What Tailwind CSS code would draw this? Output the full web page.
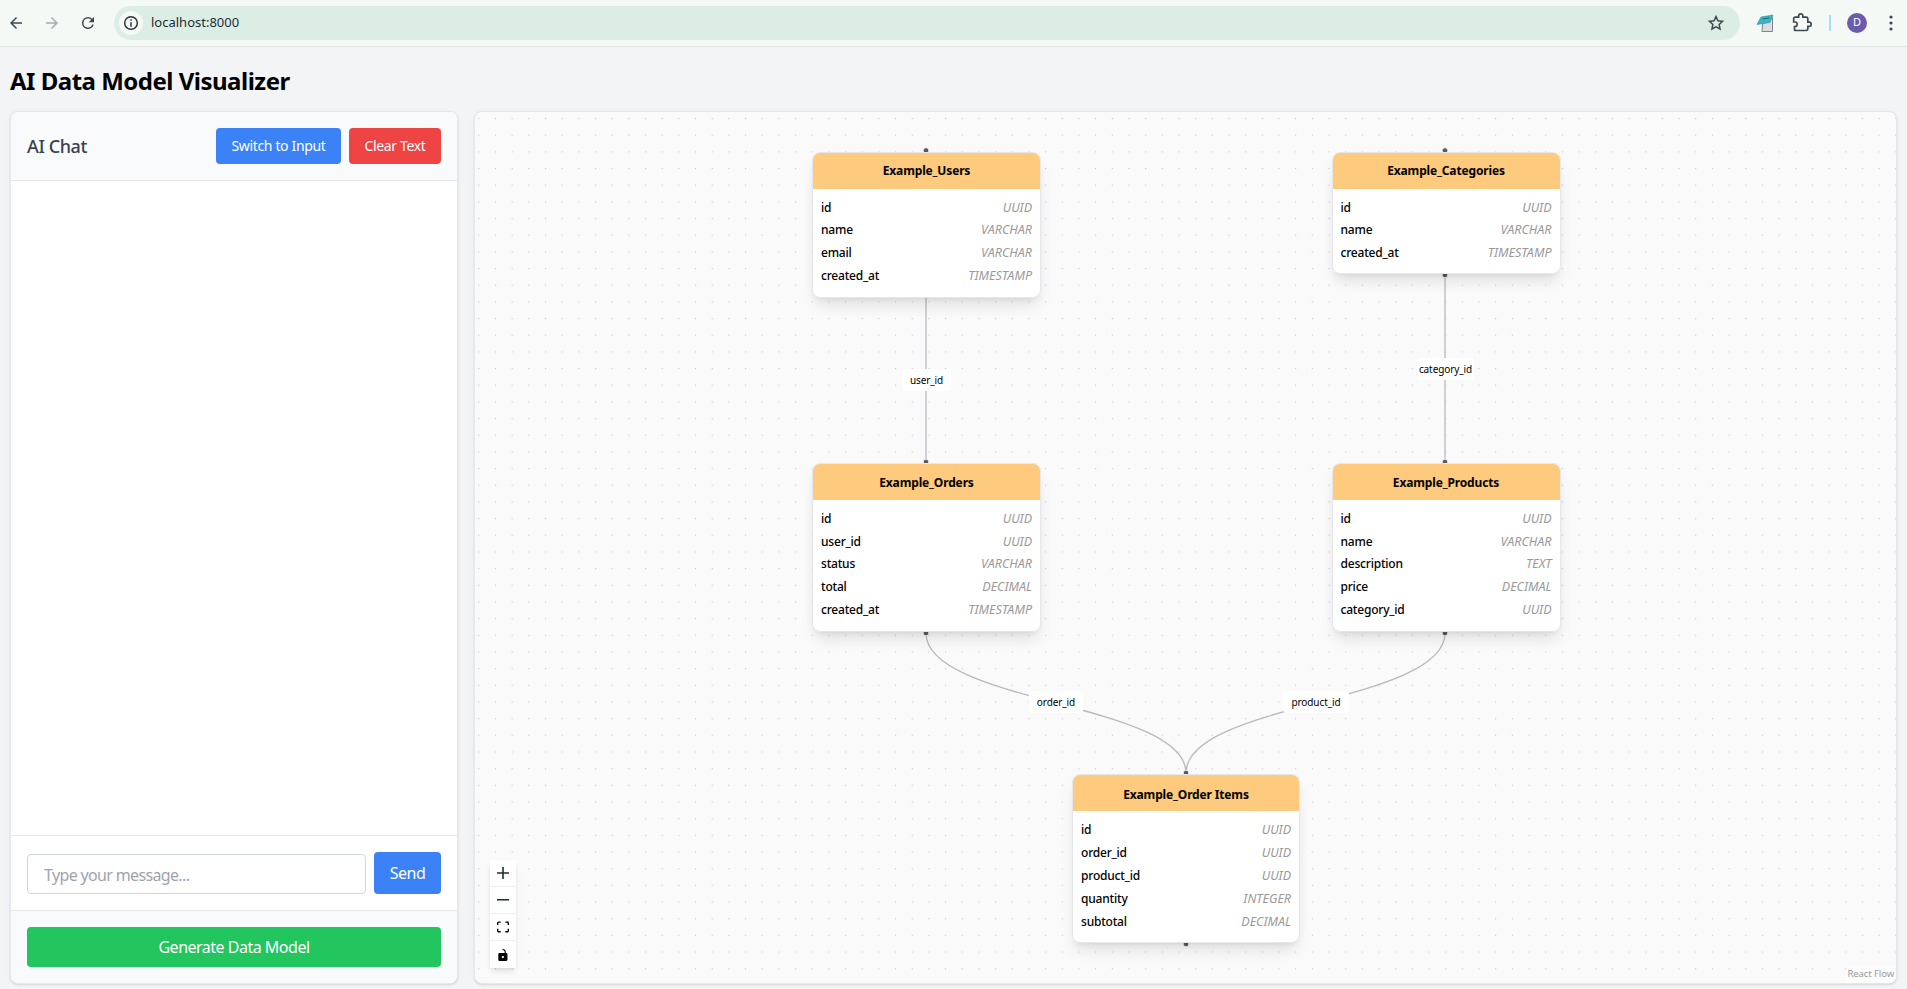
<!DOCTYPE html>
<html lang="en">
<head>
    <meta charset="UTF-8">
    <meta name="viewport" content="width=device-width, initial-scale=1.0">
    <title>AI Data Model Visualizer</title>
    <script src="https://cdn.jsdelivr.net/npm/@tailwindcss/browser@4"></script>
</head>
<body class="h-[989px] overflow-hidden flex flex-col bg-[#f3f4f6] font-['Noto_Sans',sans-serif] text-black">

<!-- browser toolbar -->
<div class="h-[47px] shrink-0 flex items-center bg-[#f4f9f6] border-b border-[#e2e6e8] pb-px">
    <div class="w-[114px] shrink-0 flex items-center pl-[7px] gap-[18px]">
        <svg class="w-[18px] h-[18px] text-[#3c4a4f]" viewBox="0 0 24 24" fill="currentColor"><path d="M20 11H7.830l5.590-5.590L12 4l-8 8 8 8 1.410-1.410L7.830 13H20v-2z"/></svg>
        <svg class="w-[18px] h-[18px] text-[#a5abb0]" viewBox="0 0 24 24" fill="currentColor"><path d="M4 11h12.170l-5.590-5.590L12 4l8 8-8 8-1.410-1.410L16.170 13H4v-2z"/></svg>
        <svg class="w-[18px] h-[18px] text-[#3c4a4f]" viewBox="0 0 24 24" fill="currentColor"><path d="M17.650 6.350A7.960 7.960 0 0 0 12 4a8 8 0 1 0 7.730 10h-2.080A6 6 0 1 1 12 6c1.660 0 3.140.690 4.220 1.780L13 11h7V4l-2.350 2.350z"/></svg>
    </div>
    <div class="w-[1626px] h-[34px] flex items-center rounded-full bg-[#dcede6] pl-[5px] pr-[15px]">
        <div class="w-6 h-6 rounded-full bg-[#f4f9f6] flex items-center justify-center">
            <svg class="w-4 h-4 text-[#283238]" viewBox="0 0 24 24" fill="none" stroke="currentColor" stroke-width="2.200"><circle cx="12" cy="12" r="9.500"/><path d="M12 11v6.500M12 6.500v2.200"/></svg>
        </div>
        <span class="ml-2 pt-px text-[13px] text-[#1f2d33]">localhost:8000</span>
        <svg class="ml-auto w-[18px] h-[18px] text-[#3c4a4f]" viewBox="0 0 24 24" fill="none" stroke="currentColor" stroke-width="2"><path d="M12 3.500l2.600 5.600 6.100.700-4.500 4.200 1.200 6-5.400-3-5.400 3 1.200-6-4.500-4.200 6.100-.700z"/></svg>
    </div>
    <div class="flex-1 flex items-center pl-[16px]">
        <svg class="w-5 h-5" viewBox="0 0 20 20"><path d="M7 6l9.500-1.500v14H6z" fill="#d9dce0" stroke="#7c8790" stroke-width="1"/><path d="M5 4l12-2-3 7.500-13 2z" fill="#3bb4c4" stroke="#2e8e9c" stroke-width=".6"/><path d="M6.500 6l7-1.200" stroke="#1d6f7c" stroke-width="1"/></svg>
        <svg class="ml-[16px] w-5 h-5 text-[#3c4a4f]" viewBox="0 0 24 24" fill="none" stroke="currentColor" stroke-width="2"><path d="M20.500 11H19V7a2 2 0 0 0-2-2h-4V3.500a2.500 2.500 0 0 0-5 0V5H4a2 2 0 0 0-2 2v3.800h1.500a2.700 2.700 0 0 1 0 5.400H3V20a1 1 0 0 0 1 1h13a2 2 0 0 0 2-2v-3h1.500a2.500 2.500 0 0 0 0-5z"/></svg>
        <div class="ml-[17px] w-0.5 h-4 bg-[#a8e0f5]"></div>
        <div class="ml-[16px] w-5 h-5 rounded-full bg-[#6a5bad] text-white text-[11px] flex items-center justify-center">D</div>
        <svg class="ml-[22px] w-1 h-4 text-[#3c4a4f]" viewBox="0 0 4 16" fill="currentColor"><circle cx="2" cy="2" r="1.600"/><circle cx="2" cy="8" r="1.600"/><circle cx="2" cy="14" r="1.600"/></svg>
    </div>
</div>

<!-- app -->
<div class="flex-1 min-h-0 flex flex-col px-2.5 pb-[5px]">
    <h1 class="text-2xl font-bold leading-8 mt-[18px] mb-[14px] tracking-[-0.5px]">AI Data Model Visualizer</h1>
    <div class="flex-1 min-h-0 flex gap-4">

        <!-- chat panel -->
        <div class="w-[448px] shrink-0 flex flex-col bg-white border border-[#e5e7eb] rounded-lg shadow-sm overflow-hidden">
            <div class="flex items-center justify-between p-4 bg-[#f9fafb] border-b border-[#e5e7eb]">
                <h2 class="text-lg font-medium text-[#374151] tracking-[-0.4px]">AI Chat</h2>
                <div class="flex gap-2">
                    <button class="h-9 w-[125px] bg-[#3b82f6] text-white text-sm rounded tracking-[-0.35px]">Switch to Input</button>
                    <button class="h-9 w-[92px] bg-[#ef4444] text-white text-sm rounded tracking-[-0.35px]">Clear Text</button>
                </div>
            </div>
            <div class="flex-1"></div>
            <div class="flex items-end gap-2 p-4 border-t border-[#e5e7eb]">
                <input type="text" placeholder="Type your message..." class="flex-1 min-w-0 h-10 px-4 pt-0.5 border border-[#d1d5db] rounded text-base tracking-[-0.65px] placeholder:text-[#9ca3af]">
                <button class="h-[42px] w-[67px] bg-[#3b82f6] text-white text-base rounded tracking-[-0.5px]">Send</button>
            </div>
            <div class="p-4 bg-[#f9fafb] border-t border-[#e5e7eb]">
                <button class="w-full h-10 bg-[#22c55e] text-white text-base rounded tracking-[-0.5px]">Generate Data Model</button>
            </div>
        </div>

        <!-- diagram -->
        <div class="flex-1 min-w-0 relative bg-[#fafafa] border border-[#e5e7eb] rounded-lg shadow-sm overflow-hidden">
            <svg class="absolute inset-0 w-full h-full">
                <defs>
                    <pattern id="dots" x="3.300" y="6" width="16.670" height="16.670" patternUnits="userSpaceOnUse">
                        <circle cx="0.600" cy="0.600" r="0.600" fill="#bcbcc2"/>
                    </pattern>
                </defs>
                <rect width="100%" height="100%" fill="url(#dots)"/>
                <g fill="none" stroke="#b8b8c0" stroke-width="1.300">
                    <path d="M451 184V350"/>
                    <path d="M970 163V350"/>
                    <path d="M451 521C451 591 711 591 711 661"/>
                    <path d="M970 521C970 591 711 591 711 661"/>
                </g>
                <g fill="#555a63" stroke="#fff" stroke-width="0.800">
                    <circle cx="451" cy="38.500" r="2.800"/>
                    <circle cx="451" cy="184" r="2.800"/>
                    <circle cx="970" cy="38.500" r="2.800"/>
                    <circle cx="970" cy="163" r="2.800"/>
                    <circle cx="451" cy="350" r="2.800"/>
                    <circle cx="451" cy="521" r="2.800"/>
                    <circle cx="970" cy="350" r="2.800"/>
                    <circle cx="970" cy="521" r="2.800"/>
                    <circle cx="711" cy="661" r="2.800"/>
                    <circle cx="711" cy="832" r="2.800"/>
                </g>
            </svg>

            <!-- edge labels -->
            <div class="absolute left-[427px] top-[257px] w-[49px] h-[22px] flex items-center justify-center bg-white rounded text-[10px] tracking-[-0.1px]">user_id</div>
            <div class="absolute left-[942px] top-[246px] w-[57px] h-[22px] flex items-center justify-center bg-white rounded text-[10px] tracking-[-0.1px]">category_id</div>
            <div class="absolute left-[554px] top-[579px] w-[54px] h-[22px] flex items-center justify-center bg-white rounded text-[10px] tracking-[-0.1px]">order_id</div>
            <div class="absolute left-[808px] top-[579px] w-[66px] h-[22px] flex items-center justify-center bg-white rounded text-[10px] tracking-[-0.1px]">product_id</div>

            <!-- Example_Users -->
            <div class="absolute left-[337px] top-[40px] w-[229px] bg-white border border-[#e5e7eb] rounded-lg shadow-lg overflow-hidden text-[12px]">
                <div class="h-[36px] flex items-center justify-center bg-[#fdca7e] font-bold tracking-[-0.15px]">Example_Users</div>
                <div class="pt-[7.500px] pb-[9.500px] px-2 leading-[22.700px] font-medium tracking-[-0.2px]">
                    <div class="flex justify-between"><span>id</span><span class="font-normal italic text-[12.5px] tracking-normal text-[#999]">UUID</span></div>
                    <div class="flex justify-between"><span>name</span><span class="font-normal italic text-[12.5px] tracking-normal text-[#999]">VARCHAR</span></div>
                    <div class="flex justify-between"><span>email</span><span class="font-normal italic text-[12.5px] tracking-normal text-[#999]">VARCHAR</span></div>
                    <div class="flex justify-between"><span>created_at</span><span class="font-normal italic text-[12.5px] tracking-normal text-[#999]">TIMESTAMP</span></div>
                </div>
            </div>

            <!-- Example_Categories -->
            <div class="absolute left-[856.500px] top-[40px] w-[229px] bg-white border border-[#e5e7eb] rounded-lg shadow-lg overflow-hidden text-[12px]">
                <div class="h-[36px] flex items-center justify-center bg-[#fdca7e] font-bold tracking-[-0.15px]">Example_Categories</div>
                <div class="pt-[7.500px] pb-[8.500px] px-2 leading-[22.700px] font-medium tracking-[-0.2px]">
                    <div class="flex justify-between"><span>id</span><span class="font-normal italic text-[12.5px] tracking-normal text-[#999]">UUID</span></div>
                    <div class="flex justify-between"><span>name</span><span class="font-normal italic text-[12.5px] tracking-normal text-[#999]">VARCHAR</span></div>
                    <div class="flex justify-between"><span>created_at</span><span class="font-normal italic text-[12.5px] tracking-normal text-[#999]">TIMESTAMP</span></div>
                </div>
            </div>

            <!-- Example_Orders -->
            <div class="absolute left-[337px] top-[351px] w-[229px] bg-white border border-[#e5e7eb] rounded-lg shadow-lg overflow-hidden text-[12px]">
                <div class="h-[36px] pt-0.5 flex items-center justify-center bg-[#fdca7e] font-bold tracking-[-0.15px]">Example_Orders</div>
                <div class="pt-2 pb-[9px] px-2 leading-[22.700px] font-medium tracking-[-0.2px]">
                    <div class="flex justify-between"><span>id</span><span class="font-normal italic text-[12.5px] tracking-normal text-[#999]">UUID</span></div>
                    <div class="flex justify-between"><span>user_id</span><span class="font-normal italic text-[12.5px] tracking-normal text-[#999]">UUID</span></div>
                    <div class="flex justify-between"><span>status</span><span class="font-normal italic text-[12.5px] tracking-normal text-[#999]">VARCHAR</span></div>
                    <div class="flex justify-between"><span>total</span><span class="font-normal italic text-[12.5px] tracking-normal text-[#999]">DECIMAL</span></div>
                    <div class="flex justify-between"><span>created_at</span><span class="font-normal italic text-[12.5px] tracking-normal text-[#999]">TIMESTAMP</span></div>
                </div>
            </div>

            <!-- Example_Products -->
            <div class="absolute left-[856.500px] top-[351px] w-[229px] bg-white border border-[#e5e7eb] rounded-lg shadow-lg overflow-hidden text-[12px]">
                <div class="h-[36px] pt-0.5 flex items-center justify-center bg-[#fdca7e] font-bold tracking-[-0.15px]">Example_Products</div>
                <div class="pt-2 pb-[9px] px-2 leading-[22.700px] font-medium tracking-[-0.2px]">
                    <div class="flex justify-between"><span>id</span><span class="font-normal italic text-[12.5px] tracking-normal text-[#999]">UUID</span></div>
                    <div class="flex justify-between"><span>name</span><span class="font-normal italic text-[12.5px] tracking-normal text-[#999]">VARCHAR</span></div>
                    <div class="flex justify-between"><span>description</span><span class="font-normal italic text-[12.5px] tracking-normal text-[#999]">TEXT</span></div>
                    <div class="flex justify-between"><span>price</span><span class="font-normal italic text-[12.5px] tracking-normal text-[#999]">DECIMAL</span></div>
                    <div class="flex justify-between"><span>category_id</span><span class="font-normal italic text-[12.5px] tracking-normal text-[#999]">UUID</span></div>
                </div>
            </div>

            <!-- Example_Order Items -->
            <div class="absolute left-[597px] top-[662px] w-[228px] bg-white border border-[#e5e7eb] rounded-lg shadow-lg overflow-hidden text-[12px]">
                <div class="h-[36px] pt-1 flex items-center justify-center bg-[#fdca7e] font-bold tracking-[-0.15px]">Example_Order Items</div>
                <div class="pt-[7px] pb-[9px] px-2 leading-[23px] font-medium tracking-[-0.2px]">
                    <div class="flex justify-between"><span>id</span><span class="font-normal italic text-[12.5px] tracking-normal text-[#999]">UUID</span></div>
                    <div class="flex justify-between"><span>order_id</span><span class="font-normal italic text-[12.5px] tracking-normal text-[#999]">UUID</span></div>
                    <div class="flex justify-between"><span>product_id</span><span class="font-normal italic text-[12.5px] tracking-normal text-[#999]">UUID</span></div>
                    <div class="flex justify-between"><span>quantity</span><span class="font-normal italic text-[12.5px] tracking-normal text-[#999]">INTEGER</span></div>
                    <div class="flex justify-between"><span>subtotal</span><span class="font-normal italic text-[12.5px] tracking-normal text-[#999]">DECIMAL</span></div>
                </div>
            </div>

            <!-- zoom controls -->
            <div class="absolute left-[15px] bottom-[15px] w-[26px] flex flex-col bg-white shadow-md">
                <div class="h-[27px] flex items-center justify-center border-b border-[#eee]">
                    <svg class="w-3 h-3 text-[#1f2d33]" viewBox="0 0 32 32" fill="currentColor"><path d="M32 18.133H18.133V32h-4.266V18.133H0v-4.266h13.867V0h4.266v13.867H32z"/></svg>
                </div>
                <div class="h-[27px] flex items-center justify-center border-b border-[#eee]">
                    <svg class="w-3 text-[#1f2d33]" viewBox="0 0 32 5" fill="currentColor"><path d="M0 0h32v4.200H0z"/></svg>
                </div>
                <div class="h-[27px] flex items-center justify-center border-b border-[#eee]">
                    <svg class="w-3 h-3 text-black" viewBox="0 0 32 30" fill="currentColor"><path d="M3.692 4.630c0-.530.400-.938.939-.938h5.215V0H4.708C2.130 0 0 2.054 0 4.630v5.216h3.692V4.631zM27.354 0h-5.200v3.692h5.170c.530 0 .984.400.984.939v5.215H32V4.631A4.624 4.624 0 0027.354 0zm.954 24.830c0 .532-.400.940-.939.940h-5.215v3.768h5.215c2.577 0 4.631-2.130 4.631-4.707v-5.139h-3.692v5.139zm-23.677.940c-.531 0-.939-.400-.939-.940v-5.138H0v5.139c0 2.577 2.130 4.707 4.708 4.707h5.138V25.770H4.631z"/></svg>
                </div>
                <div class="h-[27px] flex items-center justify-center">
                    <svg class="w-3 h-3 text-black" viewBox="0 0 25 32" fill="currentColor"><path d="M21.333 10.667H19.810V7.619C19.810 3.429 16.380 0 12.190 0c-4.114 0-1.370 2.133.305 2.438 1.676.305 4.420 2.590 4.420 5.181v3.048H3.047A3.056 3.056 0 000 13.714v15.238A3.056 3.056 0 003.048 32h18.285a3.056 3.056 0 003.048-3.048V13.714a3.056 3.056 0 00-3.048-3.047zM12.190 24.533a3.056 3.056 0 01-3.047-3.047 3.056 3.056 0 013.047-3.048 3.056 3.056 0 013.048 3.048 3.056 3.056 0 01-3.048 3.047z"/></svg>
                </div>
            </div>

            <div class="absolute right-0 bottom-0 px-0.5 pb-0.5 bg-white/50 text-[9.5px] leading-[15px] tracking-[-0.1px] text-[#999]">React Flow</div>
        </div>
    </div>
</div>
</body>
</html>
